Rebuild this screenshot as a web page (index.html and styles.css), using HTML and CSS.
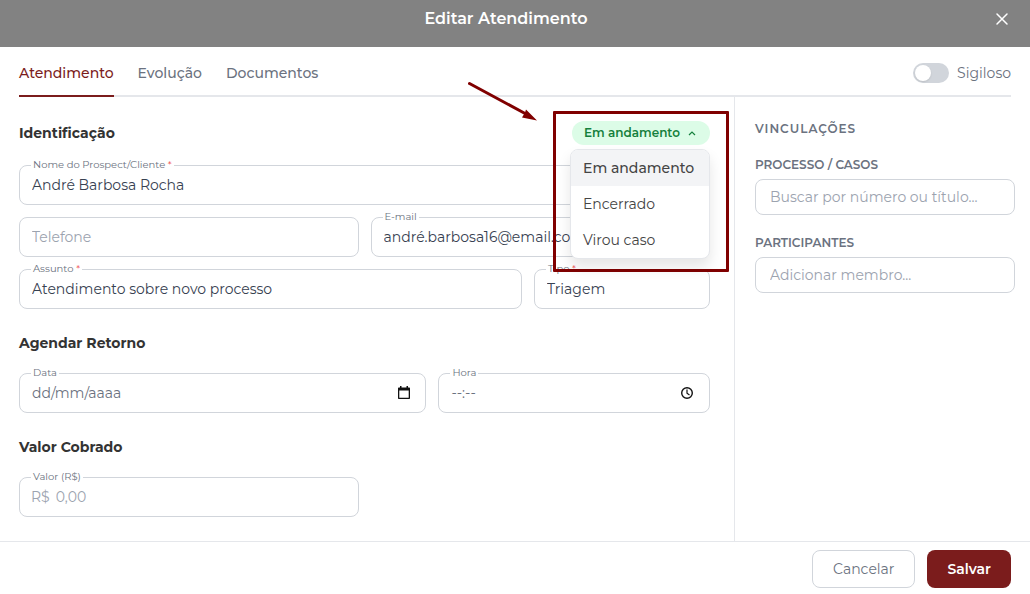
FILE: index.html
```html
<!DOCTYPE html>
<html lang="pt-BR">
<head>
    <meta charset="UTF-8">
    <meta name="viewport" content="width=device-width, initial-scale=1.0">
    <title>Editar Atendimento</title>
    <link rel="stylesheet" href="styles.css">
</head>
<body>
    <header class="modal-header">
        <h1 class="modal-title">Editar Atendimento</h1>
        <button type="button" class="close-button" aria-label="Fechar">
            <svg width="16" height="16" viewBox="0 0 16 16" fill="none" stroke="currentColor" stroke-width="1.5" stroke-linecap="round"><path d="M3 3l10 10M13 3L3 13"/></svg>
        </button>
    </header>

    <!-- Tabs -->
    <nav class="tab-bar">
        <div class="tabs" role="tablist">
            <button type="button" class="tab active" role="tab" aria-selected="true">Atendimento</button>
            <button type="button" class="tab" role="tab" aria-selected="false">Evolução</button>
            <button type="button" class="tab" role="tab" aria-selected="false">Documentos</button>
        </div>
        <label class="switch">
            <input type="checkbox" class="switch-input" name="sigiloso">
            <span>Sigiloso</span>
        </label>
    </nav>

    <form class="content" id="atendimento">
        <main class="main">
            <div class="section-header">
                <h2 class="section-title">Identificação</h2>
                <div class="status">
                    <button type="button" class="status-button" aria-haspopup="listbox" aria-expanded="true">
                        Em andamento
                        <svg width="8" height="6" viewBox="0 0 8 6" fill="none" stroke="currentColor" stroke-width="1.2"><path d="M1 5l3-3 3 3"/></svg>
                    </button>
                    <ul class="status-menu" role="listbox" aria-label="Status">
                        <li class="status-option selected" role="option" aria-selected="true">Em andamento</li>
                        <li class="status-option" role="option" aria-selected="false">Encerrado</li>
                        <li class="status-option" role="option" aria-selected="false">Virou caso</li>
                    </ul>
                    <div class="callout"></div>
                    <svg class="callout-arrow" width="72" height="42" viewBox="0 0 72 42"><path d="M3.500 3.500L60 34" stroke="currentColor" stroke-width="3" stroke-linecap="round"/><path d="M71 40.500L60 29.500L59 32.500L56 37.500z" fill="currentColor"/></svg>
                </div>
            </div>

            <!-- Identificação -->
            <div class="fields">
                <div class="field">
                    <label for="nome">Nome do Prospect/Cliente <span class="required">*</span></label>
                    <input type="text" id="nome" value="André Barbosa Rocha" required>
                </div>
                <div class="row row-half">
                    <div class="field">
                        <input type="tel" id="telefone" placeholder="Telefone" aria-label="Telefone">
                    </div>
                    <div class="field">
                        <label for="email">E-mail</label>
                        <input type="email" id="email" value="andré.barbosa16@email.com">
                    </div>
                </div>
                <div class="row row-subject">
                    <div class="field">
                        <label for="assunto">Assunto <span class="required">*</span></label>
                        <input type="text" id="assunto" value="Atendimento sobre novo processo" required>
                    </div>
                    <div class="field">
                        <label for="tipo">Tipo <span class="required">*</span></label>
                        <select id="tipo">
                            <option>Triagem</option>
                        </select>
                    </div>
                </div>
            </div>

            <!-- Retorno -->
            <h2 class="section-title spaced">Agendar Retorno</h2>
            <div class="row row-schedule">
                <div class="field">
                    <label for="data">Data</label>
                    <input type="text" id="data" class="picker" placeholder="dd/mm/aaaa">
                    <button type="button" class="picker-button" aria-label="Abrir calendário">
                        <svg width="16" height="16" viewBox="0 0 16 16"><path fill="currentColor" fill-rule="evenodd" d="M4 1h1.500v1.500h5V1H12v1.500h1c.6 0 1 .4 1 1V13c0 .6-.4 1-1 1H3c-.6 0-1-.4-1-1V3.500c0-.6.4-1 1-1h1zM3.300 5.500v7.200h9.400V5.500z"/></svg>
                    </button>
                </div>
                <div class="field">
                    <label for="hora">Hora</label>
                    <input type="text" id="hora" class="picker" placeholder="--:--">
                    <button type="button" class="picker-button" aria-label="Escolher hora">
                        <svg width="16" height="16" viewBox="0 0 16 16" fill="none" stroke="currentColor"><circle cx="7" cy="8" r="5.300" stroke-width="1.400"/><path d="M7 4.500V8.200l2.500 1.700" stroke-width="1.200"/></svg>
                    </button>
                </div>
            </div>

            <!-- Valor -->
            <h2 class="section-title spaced">Valor Cobrado</h2>
            <div class="row row-half">
                <div class="field">
                    <label for="valor">Valor (R$)</label>
                    <span class="prefix">R$</span>
                    <input type="text" id="valor" class="money" placeholder="0,00">
                </div>
            </div>
        </main>

        <aside class="sidebar">
            <h2 class="sidebar-title">Vinculações</h2>
            <div class="link-group">
                <label class="link-label" for="processo">Processo / Casos</label>
                <input type="text" class="link-input" id="processo" placeholder="Buscar por número ou título...">
            </div>
            <div class="link-group">
                <label class="link-label" for="participantes">Participantes</label>
                <input type="text" class="link-input" id="participantes" placeholder="Adicionar membro...">
            </div>
        </aside>
    </form>

    <footer class="modal-footer">
        <button type="button" class="button">Cancelar</button>
        <button type="submit" class="button primary" form="atendimento">Salvar</button>
    </footer>
</body>
</html>
```
FILE: styles.css
```css
* {
    box-sizing: border-box;
}
body {
    margin: 0;
    min-height: 100vh;
    display: flex;
    flex-direction: column;
    background-color: #fff;
    color: #374151;
    font-family: Montserrat, Inter, sans-serif;
    font-size: 14px;
    line-height: 20px;
}
h1, h2, ul {
    margin: 0;
    padding: 0;
}
button, input, select {
    font: inherit;
    color: inherit;
}
button {
    padding: 0;
    border: 0;
    background: none;
    cursor: pointer;
}
.modal-header {
    display: grid;
    align-items: center;
    padding: 8px 20px 18px 2px;
    background-color: #828282;
    color: #fff;
}
.modal-title, .close-button {
    grid-area: 1 / 1;
}
.modal-title {
    justify-self: center;
    font-size: 16px;
    font-weight: 600;
    line-height: 21px;
}
.close-button {
    justify-self: end;
    display: flex;
}
.tab-bar {
    display: flex;
    justify-content: space-between;
    margin: 0 19px;
    border-bottom: 2px solid #e5e7eb;
}
.tabs {
    display: flex;
    gap: 24px;
    margin-bottom: -2px;
}
.tab {
    padding: 16px 0 12px;
    border-bottom: 2px solid transparent;
    color: #6b7280;
    font-weight: 500;
}
.tab.active {
    border-color: #7b1c1c;
    color: #7b1c1c;
}
.switch {
    display: flex;
    align-items: center;
    gap: 8px;
    padding-top: 4px;
    color: #6b7280;
}
.switch-input {
    appearance: none;
    width: 36px;
    height: 20px;
    margin: 0;
    padding: 2px;
    border-radius: 10px;
    background-color: #d1d5db;
}
.switch-input::before {
    content: "";
    display: block;
    width: 16px;
    height: 16px;
    border-radius: 50%;
    background-color: #fff;
    box-shadow: 0 1px 2px rgba(0, 0, 0, 0.1);
}
.switch-input:checked {
    background-color: #7b1c1c;
}
.switch-input:checked::before {
    margin-left: 16px;
}
.content {
    flex: 1;
    display: flex;
}
.main {
    flex: 1;
    min-width: 0;
    padding: 24px 24px 24px 19px;
}
.section-header {
    display: flex;
    justify-content: space-between;
    margin-bottom: 20px;
}
.section-title {
    color: #333;
    font-size: 14px;
    font-weight: 700;
    line-height: 24px;
}
.section-title.spaced {
    margin: 22px 0 18px;
}
.status {
    position: relative;
    z-index: 2;
}
.status-button {
    display: flex;
    align-items: center;
    gap: 8px;
    height: 24px;
    padding: 0 14px 0 12px;
    border-radius: 12px;
    background-color: #dcfce7;
    color: #15803d;
    font-size: 12px;
    font-weight: 600;
}
.status-menu {
    position: absolute;
    z-index: 2;
    top: 28px;
    right: 0;
    width: 140px;
    overflow: hidden;
    border: 1px solid #e5e7eb;
    border-radius: 8px;
    background-color: #fff;
    box-shadow: 0 8px 14px rgba(0, 0, 0, 0.1);
    color: #444;
    list-style: none;
}
.status-option {
    padding: 8px 12px;
    white-space: nowrap;
    cursor: pointer;
}
.status-option.selected {
    background-color: #f3f4f6;
    font-weight: 500;
}
.callout {
    position: absolute;
    top: -10px;
    right: -19px;
    width: 176px;
    height: 161px;
    border: 3px solid #800000;
    border-radius: 1px;
    pointer-events: none;
}
.callout-arrow {
    position: absolute;
    top: -41px;
    right: 172px;
    color: #800000;
    pointer-events: none;
}
.fields {
    display: grid;
    gap: 12px;
}
.row {
    display: grid;
    gap: 12px;
}
.row-half {
    grid-template-columns: 1fr 1fr;
}
.row-subject {
    grid-template-columns: 1fr 176px;
}
.row-schedule {
    grid-template-columns: 3fr 2fr;
}
.field {
    position: relative;
    display: flex;
    align-items: center;
    height: 40px;
    border: 1px solid #d1d5db;
    border-radius: 8px;
}
.field label {
    position: absolute;
    top: -8px;
    left: 11px;
    padding: 0 2px;
    background-color: #fff;
    color: #6b7280;
    font-size: 10px;
    line-height: 14px;
}
.required {
    color: #ef4444;
}
.field input, .field select {
    appearance: none;
    flex: 1;
    min-width: 0;
    height: 100%;
    padding: 0 12px;
    border: 0;
    background: none;
}
input::placeholder {
    color: #9ca3af;
}
.field .picker::placeholder {
    color: #6b7280;
}
.picker-button {
    display: flex;
    margin-right: 13px;
    color: #111;
}
.prefix {
    padding-left: 11px;
    color: #9ca3af;
}
.field .money {
    padding-left: 6px;
}
.sidebar {
    display: flex;
    flex: 0 0 296px;
    flex-direction: column;
    gap: 20px;
    padding: 24px 15px 24px 20px;
    border-left: 1px solid #e5e7eb;
    color: #6b7280;
    font-size: 12px;
    line-height: 16px;
    text-transform: uppercase;
}
.sidebar-title {
    font-size: 12px;
    font-weight: 600;
    letter-spacing: 1px;
}
.link-group {
    display: grid;
    gap: 6px;
}
.link-label {
    font-weight: 600;
}
.link-input {
    width: 100%;
    height: 36px;
    padding: 0 14px;
    border: 1px solid #d1d5db;
    border-radius: 8px;
    color: #374151;
    font-size: 14px;
}
.modal-footer {
    display: flex;
    justify-content: flex-end;
    gap: 12px;
    padding: 8px 19px 6px;
    border-top: 1px solid #e5e7eb;
}
.button {
    height: 38px;
    padding: 0 20px;
    border: 1px solid #d1d5db;
    border-radius: 8px;
    color: #6b7280;
}
.button.primary {
    border: 0;
    background-color: #7b1c1c;
    color: #fff;
    font-weight: 600;
}
```
